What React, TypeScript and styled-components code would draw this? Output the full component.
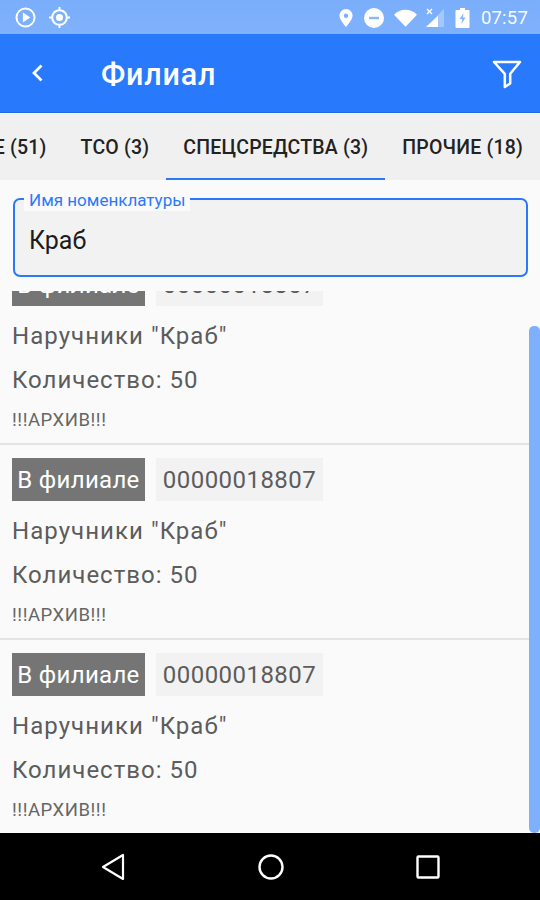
import styled, { createGlobalStyle } from "styled-components";

const GlobalStyle = createGlobalStyle`
  html, body {
    margin: 0;
    padding: 0;
    background: #fafafa;
  }

  * {
    box-sizing: border-box;
  }
`;

const items = [
  { id: 1, code: "00000018807" },
  { id: 2, code: "00000018807" },
  { id: 3, code: "00000018807" },
];

const tabs = ["ОРУЖИЕ (51)", "ТСО (3)", "СПЕЦСРЕДСТВА (3)", "ПРОЧИЕ (18)"];

export default function App() {
  return (
    <Screen>
      <GlobalStyle />
      <StatusBar>
        <StatusGroup>
          <svg width="21" height="21" viewBox="0 0 20 20" fill="none" stroke="#fff">
            <circle cx="10" cy="10" r="8.6" strokeWidth="1.9" />
            <path d="M8 6.2 13.6 10 8 13.8Z" fill="#fff" strokeWidth="1" />
          </svg>
          <GpsIcon width="23" height="23" viewBox="0 0 22 22" fill="none" stroke="#fff">
            <circle cx="11" cy="11" r="7" strokeWidth="2" />
            <circle cx="11" cy="11" r="3.4" fill="#fff" strokeWidth="0" />
            <path d="M11 1v3M11 18v3M1 11h3M18 11h3" strokeWidth="1.8" />
          </GpsIcon>
        </StatusGroup>
        <StatusGroup>
          <svg width="14" height="18" viewBox="0 0 14 18" fill="#fff">
            <path
              fillRule="evenodd"
              d="M7 0a6.6 6.6 0 0 1 6.6 6.6C13.6 11 7 18 7 18S.4 11 .4 6.6A6.6 6.6 0 0 1 7 0Zm0 4.5a2.2 2.2 0 1 0 0 4.4 2.2 2.2 0 0 0 0-4.4Z"
            />
          </svg>
          <DndIcon width="20" height="20" viewBox="0 0 20 20">
            <circle cx="10" cy="10" r="10" fill="#fff" />
            <rect x="5" y="8.8" width="10" height="2.4" fill="#8ab7fb" />
          </DndIcon>
          <WifiIcon width="23" height="18" viewBox="0 0 24 18" fill="#fff">
            <path d="M0 5.5C3.3 2.3 7.4.5 12 .5s8.7 1.8 12 5L12 18Z" />
          </WifiIcon>
          <SignalIcon width="20" height="20" viewBox="0 0 20 20">
            <path d="M19 1v18H1Z" fill="#a5c8fc" />
            <path d="M13 8v11H1Z" fill="#fff" />
            <path d="M2 1l5 5M7 1 2 6" stroke="#fff" strokeWidth="1.3" />
          </SignalIcon>
          <BatteryIcon width="15" height="20" viewBox="0 0 14 20">
            <path d="M4.5 0h5v2H13a1 1 0 0 1 1 1v16a1 1 0 0 1-1 1H1a1 1 0 0 1-1-1V3a1 1 0 0 1 1-1h3.5Z" fill="#fff" />
            <path d="M8 5 4 11h2.5L6 16l4-6.5H7.5Z" fill="#8ab7fb" />
          </BatteryIcon>
          <Clock>07:57</Clock>
        </StatusGroup>
      </StatusBar>

      <AppBar>
        <BackButton aria-label="Назад">
          <svg width="14" height="20" viewBox="0 0 14 20" fill="none" stroke="#fff" strokeWidth="2.8">
            <path d="M11.5 2.5 4 10l7.5 7.5" />
          </svg>
        </BackButton>
        <Title>Филиал</Title>
        <FilterButton aria-label="Фильтр">
          <svg width="30" height="30" viewBox="0 0 30 30" fill="none" stroke="#fff" strokeWidth="2.5" strokeLinejoin="round">
            <path d="M2 3h26L18.2 14.8V24.5L12.8 28V14.8Z" />
          </svg>
        </FilterButton>
      </AppBar>

      <TabStrip>
        {tabs.map((tab) => (
          <Tab key={tab} $active={tab.startsWith("СПЕЦ")}>
            {tab}
          </Tab>
        ))}
      </TabStrip>

      <SearchArea>
        <SearchBox>
          <FloatingLabel>Имя номенклатуры</FloatingLabel>
          <SearchValue>Краб</SearchValue>
        </SearchBox>
      </SearchArea>

      <ListViewport>
        <ScrolledList>
          {items.map((item) => (
            <Row key={item.id}>
              <BadgeLine>
                <StatusBadge>В филиале</StatusBadge>
                <CodeBadge>{item.code}</CodeBadge>
              </BadgeLine>
              <RowName>Наручники "Краб"</RowName>
              <RowQty>Количество: 50</RowQty>
              <RowNote>!!!АРХИВ!!!</RowNote>
            </Row>
          ))}
        </ScrolledList>
        <ScrollThumb />
      </ListViewport>

      <NavBar>
        <svg width="24" height="28" viewBox="0 0 24 28" fill="none" stroke="#fff" strokeWidth="2.2" strokeLinejoin="round">
          <path d="M22 2v24L2 14Z" />
        </svg>
        <svg width="26" height="26" viewBox="0 0 26 26" fill="none" stroke="#fff" strokeWidth="2.4">
          <circle cx="13" cy="13" r="11.5" />
        </svg>
        <svg width="24" height="24" viewBox="0 0 24 24" fill="none" stroke="#fff" strokeWidth="2.4" strokeLinejoin="round">
          <rect x="1.5" y="1.5" width="21" height="21" rx="1" />
        </svg>
      </NavBar>
    </Screen>
  );
}

const Screen = styled.div`
  width: 540px;
  height: 900px;
  display: flex;
  flex-direction: column;
  overflow: hidden;
  background: #fafafa;
  font-family: Roboto, "Noto Sans", sans-serif;
`;

const StatusBar = styled.div`
  height: 34px;
  flex: none;
  display: flex;
  align-items: center;
  justify-content: space-between;
  padding: 1px 12px 0 15px;
  background: linear-gradient(#7aaefb, #80b1fb);
`;

const StatusGroup = styled.div`
  display: flex;
  align-items: center;
`;

const GpsIcon = styled.svg`
  margin-left: 12px;
`;

const DndIcon = styled.svg`
  margin-left: 11px;
`;

const WifiIcon = styled.svg`
  margin-left: 10px;
`;

const SignalIcon = styled.svg`
  margin-left: 8px;
`;

const BatteryIcon = styled.svg`
  margin-left: 10px;
`;

const Clock = styled.span`
  margin-left: 11px;
  color: #fff;
  font-size: 18.5px;
  letter-spacing: 0.2px;
  opacity: 0.95;
`;

const AppBar = styled.header`
  height: 79px;
  flex: none;
  display: flex;
  align-items: center;
  background: #2979fd;
  border-bottom: 1px solid #1a6be8;
`;

const BackButton = styled.button`
  width: 99px;
  height: 100%;
  padding: 0 0 0 30px;
  flex: none;
  display: flex;
  align-items: center;
  background: none;
  border: 0;
`;

const Title = styled.h1`
  flex: 1;
  margin: 0;
  padding: 2px 0 0 2px;
  color: #fff;
  font-size: 30.5px;
  font-weight: 500;
  letter-spacing: 0.8px;
`;

const FilterButton = styled.button`
  width: 48px;
  height: 100%;
  padding: 2px 0 0 0;
  flex: none;
  display: flex;
  align-items: center;
  background: none;
  border: 0;
`;

const TabStrip = styled.nav`
  height: 67px;
  flex: none;
  display: flex;
  justify-content: flex-end;
  overflow: hidden;
  background: #f0f0f0;
  box-shadow: inset 0 1px 0 #fff;
`;

const Tab = styled.div<{ $active?: boolean }>`
  flex: none;
  display: flex;
  align-items: center;
  padding: 3px 17px 0;
  color: #222;
  font-size: 19.5px;
  font-weight: 500;
  letter-spacing: 0.2px;
  white-space: nowrap;
  border-bottom: 2px solid ${(p) => (p.$active ? "#2979fd" : "transparent")};
`;

const SearchArea = styled.div`
  flex: none;
  height: 111px;
  padding: 18px 12px 0 13px;
  background: #fafafa;
`;

const SearchBox = styled.div`
  position: relative;
  height: 79px;
  display: flex;
  align-items: center;
  padding: 6px 14px 0;
  background: #f2f2f2;
  border: 2px solid #2979fd;
  border-radius: 7px;
`;

const FloatingLabel = styled.span`
  position: absolute;
  top: -9px;
  left: 9px;
  padding: 0 5px;
  height: 20px;
  line-height: 18px;
  background: #fafafa;
  color: #2979fd;
  font-size: 17px;
`;

const SearchValue = styled.span`
  color: #1c1c1c;
  font-size: 25px;
`;

const ListViewport = styled.div`
  position: relative;
  flex: 1;
  overflow: hidden;
`;

const ScrolledList = styled.div`
  margin-top: -41px;
`;

const Row = styled.div`
  height: 195px;
  padding: 13px 12px 0;
  border-bottom: 2px solid #e4e4e4;
`;

const BadgeLine = styled.div`
  display: flex;
  gap: 11px;
`;

const StatusBadge = styled.span`
  width: 133px;
  height: 43px;
  display: flex;
  align-items: center;
  justify-content: center;
  background: #757575;
  color: #fff;
  font-size: 24px;
  letter-spacing: 0.3px;
`;

const CodeBadge = styled.span`
  width: 167px;
  height: 43px;
  display: flex;
  align-items: center;
  justify-content: center;
  background: #f2f2f2;
  color: #5c5c5c;
  font-size: 24px;
  letter-spacing: 0.45px;
`;

const RowName = styled.div`
  margin-top: 14px;
  color: #5c5c5c;
  font-size: 24px;
  line-height: 32px;
  letter-spacing: 1.05px;
`;

const RowQty = styled.div`
  margin-top: 12px;
  color: #5c5c5c;
  font-size: 24px;
  line-height: 32px;
  letter-spacing: 1px;
`;

const RowNote = styled.div`
  margin-top: 13px;
  color: #666;
  font-size: 18.5px;
  line-height: 22px;
  letter-spacing: 0.55px;
`;

const ScrollThumb = styled.div`
  position: absolute;
  top: 35px;
  right: 0;
  bottom: 0;
  width: 11px;
  background: #7fb0fb;
  border-radius: 5px;
`;

const NavBar = styled.footer`
  height: 67px;
  flex: none;
  display: flex;
  align-items: center;
  padding: 0 100px 0 101px;
  justify-content: space-between;
  background: #000;
`;
